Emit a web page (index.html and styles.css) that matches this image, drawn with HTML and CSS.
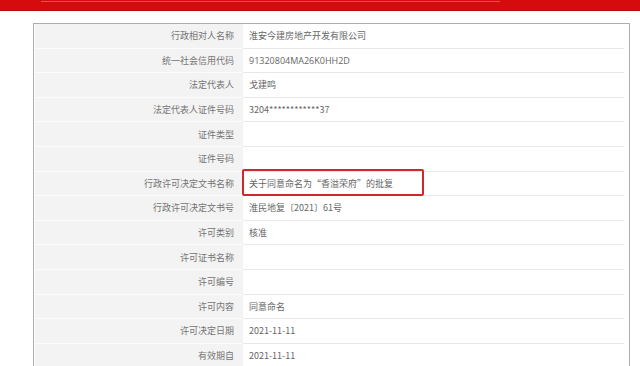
FILE: index.html
```html
<!DOCTYPE html>
<html lang="zh-CN">
<head>
<meta charset="utf-8">
<title>行政许可信息</title>
<link rel="stylesheet" href="styles.css">
</head>
<body>
<div class="topbar"><div class="topnav"></div></div>
<div class="panel">
  <div class="row"><div class="label">行政相对人名称</div><div class="value">淮安今建房地产开发有限公司</div></div>
  <div class="row"><div class="label">统一社会信用代码</div><div class="value latin">91320804MA26K0HH2D</div></div>
  <div class="row"><div class="label">法定代表人</div><div class="value">戈建鸣</div></div>
  <div class="row"><div class="label">法定代表人证件号码</div><div class="value">3204************37</div></div>
  <div class="row"><div class="label">证件类型</div><div class="value"></div></div>
  <div class="row"><div class="label">证件号码</div><div class="value"></div></div>
  <div class="row"><div class="label">行政许可决定文书名称</div><div class="value">关于同意命名为“香溢荣府”的批复<span class="mark"></span></div></div>
  <div class="row"><div class="label">行政许可决定文书号</div><div class="value">淮民地复〔2021〕61号</div></div>
  <div class="row"><div class="label">许可类别</div><div class="value">核准</div></div>
  <div class="row"><div class="label">许可证书名称</div><div class="value"></div></div>
  <div class="row"><div class="label">许可编号</div><div class="value"></div></div>
  <div class="row"><div class="label">许可内容</div><div class="value">同意命名</div></div>
  <div class="row"><div class="label">许可决定日期</div><div class="value">2021-11-11</div></div>
  <div class="row"><div class="label">有效期自</div><div class="value">2021-11-11</div></div>
</div>
</body>
</html>
```
FILE: styles.css
```css
html, body {
  margin: 0;
  padding: 0;
  background: #fff;
  overflow: hidden;
}
body {
  font-family: "Noto Sans CJK SC", "Noto Sans", "Liberation Sans", sans-serif;
  font-size: 9px;
  color: #666;
}
.topbar {
  height: 10px;
  background: #d50b0d;
  border-bottom: 1px solid #b30d0d;
}
.topnav {
  margin-left: 41px;
  width: 459px;
  height: 1px;
  border-bottom: 1px solid #e05050;
}
.panel {
  margin: 12px 0 0 33px;
  width: 589px;
  border: 1px solid #adadad;
  border-bottom: none;
  padding: 0 5px 0 1px;
  display: flex;
  flex-direction: column;
}
.row {
  display: grid;
  grid-template-columns: 208px 1fr;
  height: 24.6px;
}
.label {
  background: #f3f3f3;
  border-bottom: 1px solid #fbfbfb;
  padding-right: 9px;
  display: flex;
  align-items: center;
  justify-content: flex-end;
  color: #747474;
}
.value {
  background: #fff;
  border-bottom: 1px solid #e8e8e8;
  padding-left: 6px;
  display: flex;
  align-items: center;
  color: #666;
  position: relative;
}
.latin {
  font-family: "Open Sans", "Noto Sans", sans-serif;
}
.mark {
  position: absolute;
  left: -1px;
  top: -3px;
  width: 178px;
  height: 23px;
  border: 2px solid #cc2a2a;
  border-radius: 2px;
}
```
